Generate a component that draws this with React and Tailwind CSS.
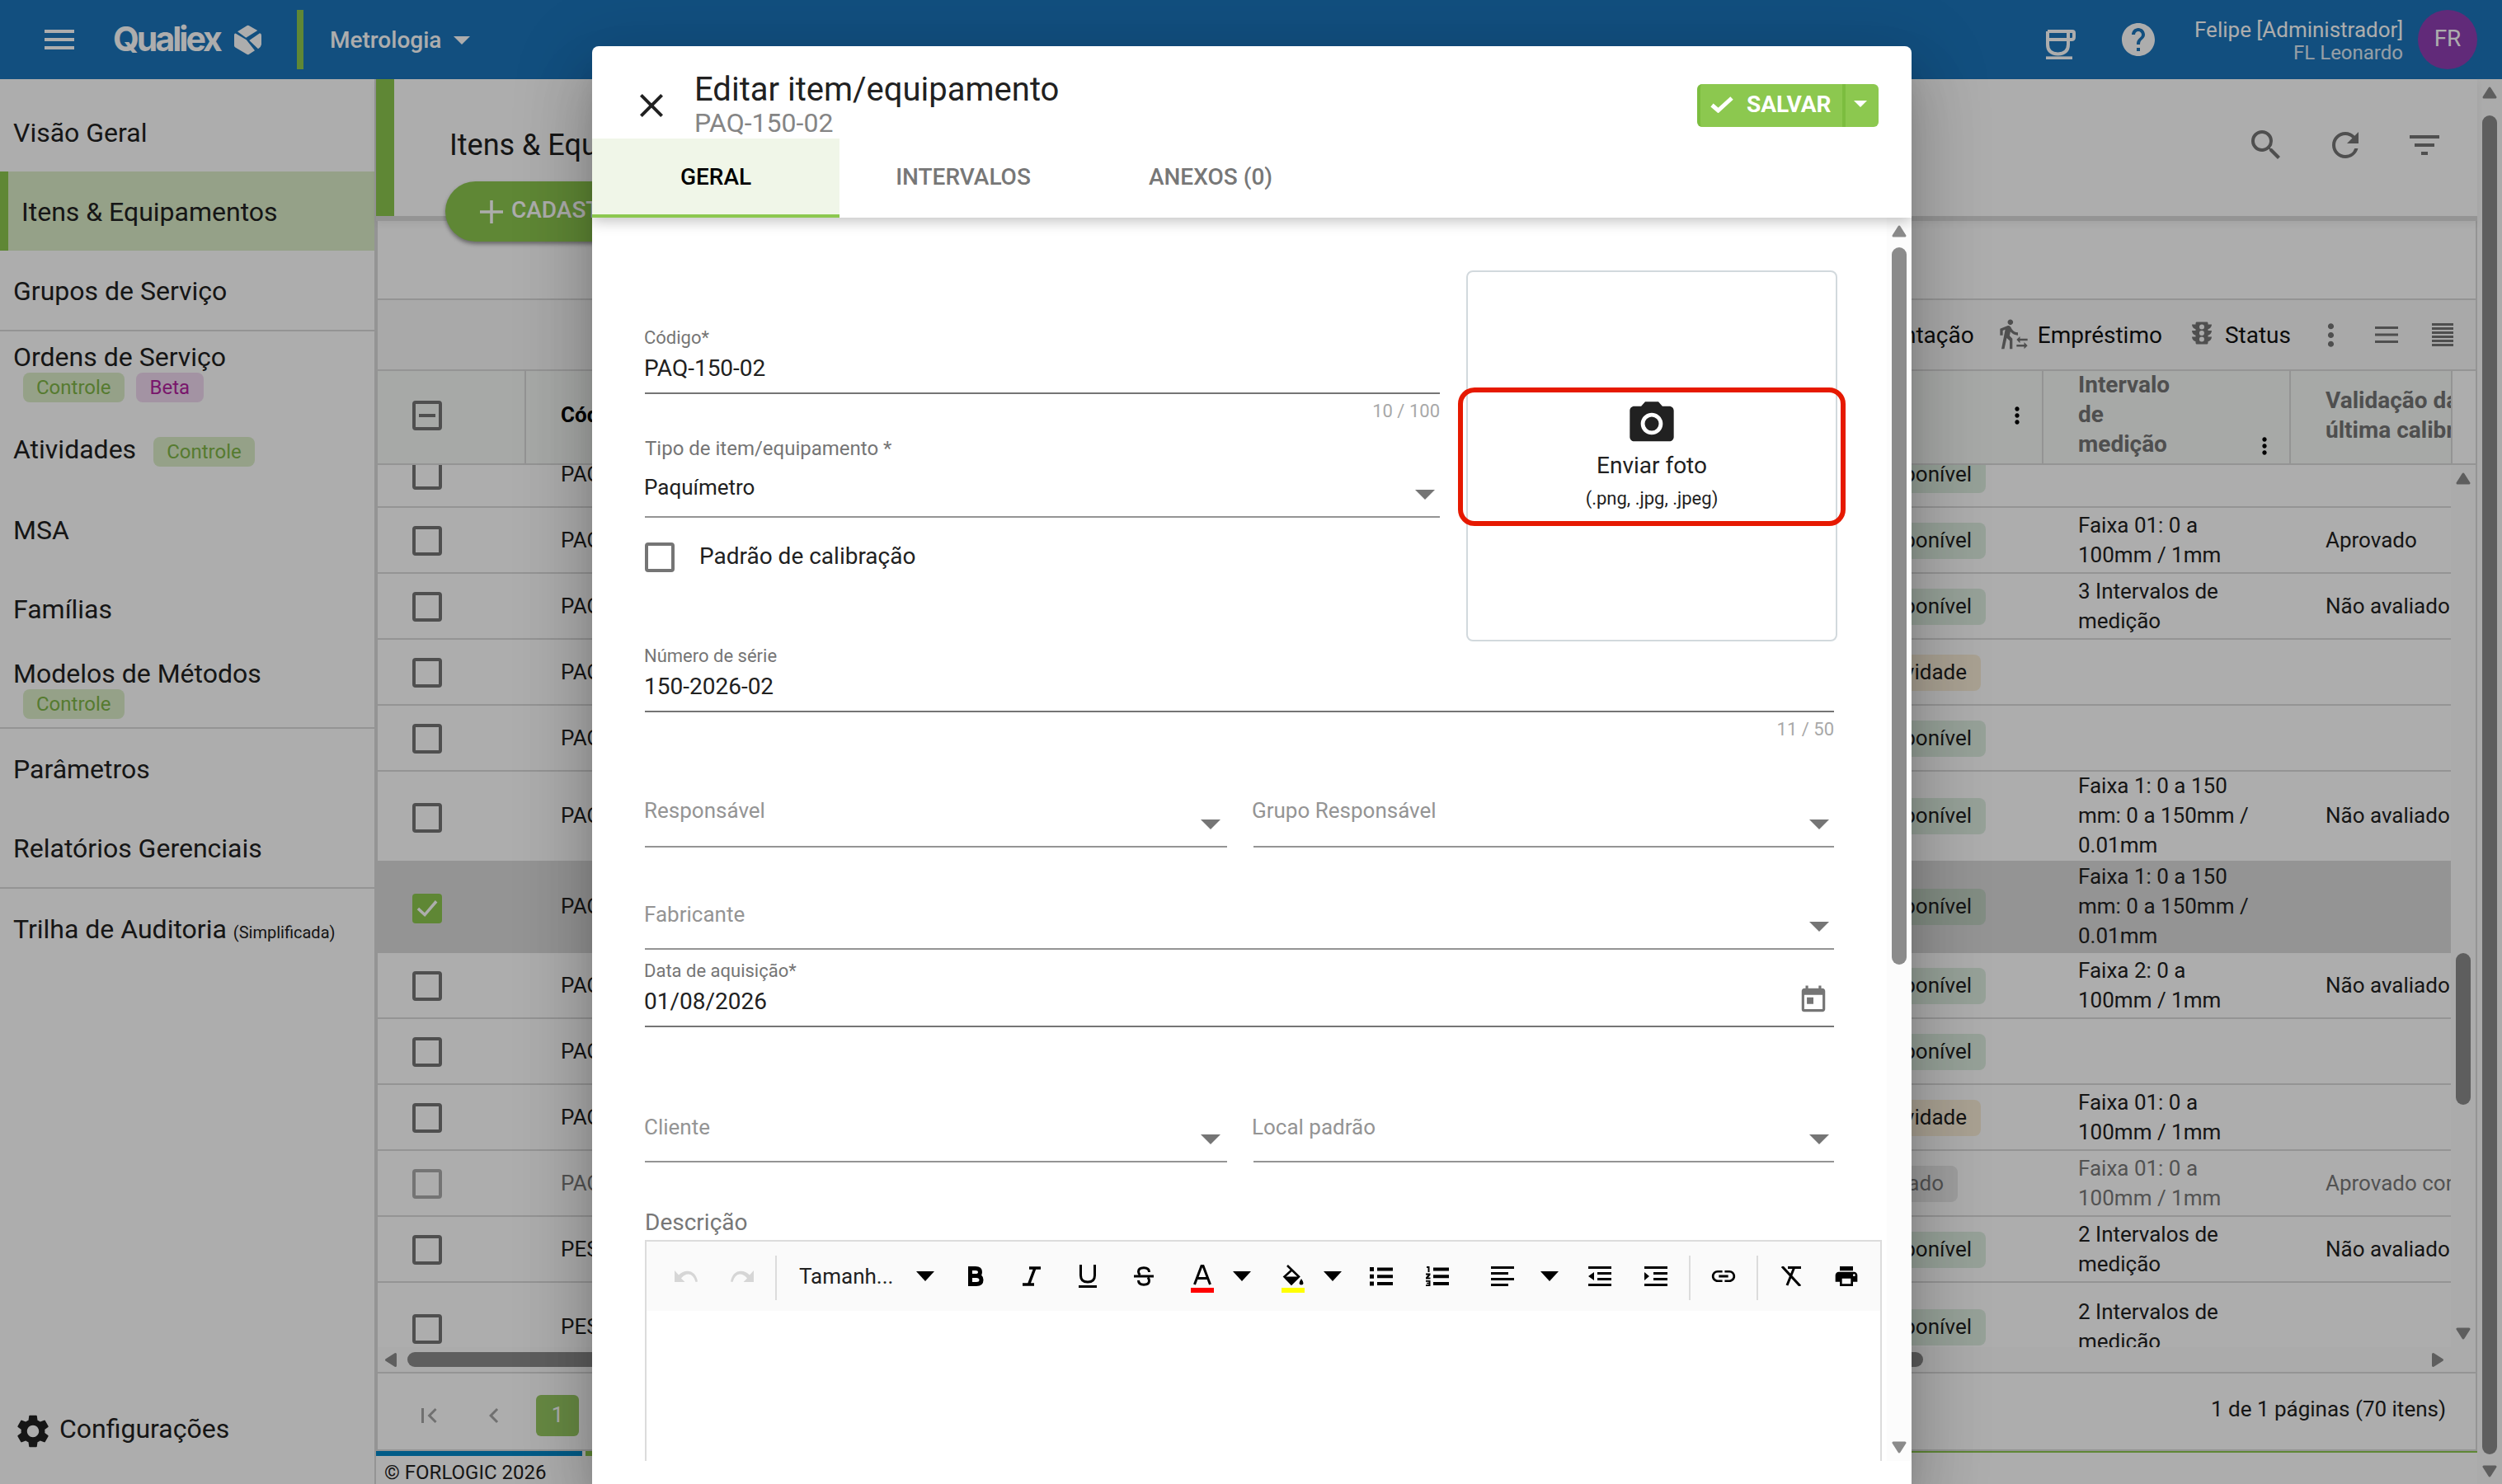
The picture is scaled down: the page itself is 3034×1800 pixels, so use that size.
import React from 'react';
import {
  MdMenu, MdHelp, MdSearch, MdRefresh, MdFilterList, MdSettings, MdClose, MdPhotoCamera, MdToday,
  MdTransferWithinAStation, MdTraffic, MdMoreVert, MdPrint, MdLink, MdFirstPage, MdChevronLeft,
} from 'react-icons/md';

const menu = [
  { nome: 'Visão Geral' },
  { nome: 'Itens & Equipamentos', ativo: true },
  { nome: 'Grupos de Serviço', linha: true },
  { nome: 'Ordens de Serviço', abaixo: ['Controle', 'Beta'] },
  { nome: 'Atividades', lado: true },
  { nome: 'MSA' },
  { nome: 'Famílias' },
  { nome: 'Modelos de Métodos', abaixo: ['Controle'], linha: true },
  { nome: 'Parâmetros' },
  { nome: 'Relatórios Gerenciais', linha: true },
  { nome: 'Trilha de Auditoria', nota: '(Simplificada)' },
];

const linhas = [
  { cod: 'PAQ', status: 'disp', faixa: [], val: '' },
  { cod: 'PAQ', status: 'disp', faixa: ['Faixa 01: 0 a', '100mm / 1mm'], val: 'Aprovado' },
  { cod: 'PAQ', status: 'disp', faixa: ['3 Intervalos de', 'medição'], val: 'Não avaliado' },
  { cod: 'PAQ', status: 'ativ', faixa: [], val: '' },
  { cod: 'PAQ', status: 'disp', faixa: [], val: '' },
  { cod: 'PAQ', status: 'disp', faixa: ['Faixa 1: 0 a 150', 'mm: 0 a 150mm /', '0.01mm'], val: 'Não avaliado', alta: true },
  { cod: 'PAQ', status: 'disp', faixa: ['Faixa 1: 0 a 150', 'mm: 0 a 150mm /', '0.01mm'], val: '', alta: true, marcado: true },
  { cod: 'PAQ', status: 'disp', faixa: ['Faixa 2: 0 a', '100mm / 1mm'], val: 'Não avaliado' },
  { cod: 'PAQ', status: 'disp', faixa: [], val: '' },
  { cod: 'PAQ', status: 'ativ', faixa: ['Faixa 01: 0 a', '100mm / 1mm'], val: '' },
  { cod: 'PAQ', status: 'inat', faixa: ['Faixa 01: 0 a', '100mm / 1mm'], val: 'Aprovado com', apagado: true },
  { cod: 'PES', status: 'disp', faixa: ['2 Intervalos de', 'medição'], val: 'Não avaliado' },
  { cod: 'PES', status: 'disp', faixa: ['2 Intervalos de', 'medição'], val: '', alta: true },
];

const tags = {
  disp: { texto: 'Disponível', cor: 'bg-[#51a55c]/19 mr-[68px]' },
  ativ: { texto: 'Em atividade', cor: 'bg-[#faeed7] mr-[74px]' },
  inat: { texto: 'Inativado', cor: 'bg-[#dcdcdc] mr-[102px]' },
};

const Seta = ({ className = 'w-6 h-3' }) => (
  <svg viewBox="0 0 24 12" preserveAspectRatio="none" className={className} fill="currentColor">
    <path d="M0 0h24L12 12z" />
  </svg>
);

const SetaRolagem = ({ className = '' }) => (
  <svg viewBox="0 0 18 15" className={`w-[18px] h-[15px] shrink-0 ${className}`} fill="currentColor" stroke="currentColor" strokeWidth="3" strokeLinejoin="round">
    <path d="M9 2L16 13H2z" />
  </svg>
);

const Caixa = ({ marcado, parcial }) => (
  <span
    className={`w-9 h-9 shrink-0 rounded-[4px] flex items-center justify-center ${
      marcado ? 'bg-[#8cc84f] text-white' : 'border-4 border-[#757575] text-[#757575]'
    }`}
  >
    {marcado && (
      <svg viewBox="0 0 24 24" className="w-7 h-7" fill="none" stroke="currentColor" strokeWidth="3">
        <path d="M2.500 12L9.500 18.500 21.500 4.500" />
      </svg>
    )}
    {parcial && <span className="w-5 h-1 bg-[#757575]" />}
  </span>
);

const Selo = ({ children }) => (
  <span
    className={`h-9 rounded-lg text-[24px] leading-9 ${
      children === 'Beta' ? 'px-[17px] bg-[#f0d9f0] text-[#b3239f]' : 'px-4 bg-[#dceec9] text-[#7fb547]'
    }`}
  >
    {children}
  </span>
);

const Cabecalho = () => (
  <header className="h-24 shrink-0 bg-[#1b75bb] text-white flex items-center">
    <MdMenu className="w-12 h-12 ml-12" />
    <div className="ml-[41px] flex items-center w-[183px]">
      <span className="font-[Inter] font-bold text-[41px] leading-[46px] tracking-[-3px] w-[147px] mb-[2px]">Qualiex</span>
      <svg viewBox="0 0 33 37" className="w-[33px] h-[37px] shrink-0" fill="currentColor">
        <path d="M15.700 1q1-.6 2 0L28.300 7 14.300 15.800 4 8.300z" />
        <path d="M0 12.500Q.2 10 2 10.800L14.700 18.300 25 31.300 17.700 36q-1 .6-2 0L1.300 27.500Q0 26.700 0 25.300z" />
        <path d="M18.300 19L31 10.300Q33 10.500 33 13v11Q32.500 27 29 29.300z" />
      </svg>
    </div>
    <div className="w-2 h-[72px] bg-[#8cc84f] ml-[40px]" />
    <span className="ml-[32px] mt-[2px] text-[28px] font-medium">Metrologia</span>
    <Seta className="w-5 h-[10px] ml-[15px] mt-[2px]" />
    <div className="ml-auto flex items-center">
      <svg viewBox="0 0 36 36" className="w-9 h-9 mt-3" fill="none" stroke="currentColor" strokeWidth="4">
        <path d="M2 2h30q2 0 2 2v5q0 3-3 3h-4M2 2v16q0 11 12.500 11.500Q27 29 27 18V2M2 12h25" />
        <path d="M0 34.200h32" strokeWidth="3.600" />
      </svg>
      <MdHelp className="w-12 h-12 ml-[52px]" />
      <div className="ml-[44px] w-[253px] text-right">
        <div className="text-[26px] leading-[36px] whitespace-nowrap">Felipe [Administrador]</div>
        <div className="text-[24px] leading-7 text-white/85 -mt-[4px]">FL Leonardo</div>
      </div>
      <div className="w-[72px] h-[72px] rounded-full bg-[#903eb3] ml-[18px] mr-[30px] flex items-center justify-center text-[28px] leading-[68px] pb-[3px]">FR</div>
    </div>
  </header>
);

const Lateral = () => (
  <aside className="w-[456px] shrink-0 border-r-2 border-[#dadada] pt-4 flex flex-col text-[32px]">
    {menu.map((m) => (
      <div
        key={m.nome}
        className={`shrink-0 flex flex-col justify-center whitespace-nowrap pl-4 ${m.linha ? 'h-[98px] border-b-2 border-[#dadada]' : 'h-24'} ${
          m.ativo ? 'bg-[#dceec9] border-l-[10px] border-[#8cc84f]' : ''
        }`}
      >
        <div className={`flex items-center ${m.abaixo ? 'leading-[36px] mt-px' : 'leading-10'} ${m.lado ? '-mt-[2px]' : 'pt-px'}`}>
          {m.nome}
          {m.nota && <span className="text-[20px] ml-2 mt-2">{m.nota}</span>}
          {m.lado && <div className="ml-[21px] mt-[6px] flex"><Selo>Controle</Selo></div>}
        </div>
        {m.abaixo && (
          <div className="flex gap-[14px] ml-3 mt-px -mb-px leading-9">
            {m.abaixo.map((s) => <Selo key={s}>{s}</Selo>)}
          </div>
        )}
      </div>
    ))}
    <div className="mt-auto mb-[40px] ml-4 flex items-center">
      <MdSettings className="w-12 h-12" />
      <span className="ml-2 mt-[-7px] leading-10">Configurações</span>
    </div>
  </aside>
);

const Linha = ({ linha }) => {
  const tag = tags[linha.status];
  return (
    <div className={`shrink-0 border-b-2 border-[#dadada] ${linha.alta ? 'h-[110px]' : 'h-20'} ${linha.marcado ? 'bg-[#dadada]' : ''}`}>
      <div className={`h-full flex items-center text-[26px] leading-9 whitespace-nowrap ${linha.apagado ? 'opacity-60' : ''} ${linha.alta ? 'pb-[2px]' : ''}`}>
        <div className={`w-[180px] pl-[42px] ${linha.alta ? 'pt-[5px]' : 'pt-[2px]'}`}><Caixa marcado={linha.marcado} /></div>
        <div className="pl-[42px]">{linha.cod}</div>
        <div className={`ml-auto h-11 mt-[2px] px-[17px] rounded-lg leading-[42px] ${tag.cor}`}>{tag.texto}</div>
        <div className="w-[300px] pl-[44px]">
          {linha.faixa.map((f) => <div key={f}>{f}</div>)}
        </div>
        <div className="w-[196px] pl-[44px] overflow-hidden">{linha.val}</div>
      </div>
    </div>
  );
};

const Tabela = () => (
  <>
    <div className="h-[114px] shrink-0 flex border-b-2 border-[#dadada] text-[28px] leading-9 font-bold">
      <div className="w-[2516px] flex bg-[#f6faf7] overflow-hidden border-r-2 border-[#dadada]">
        <div className="w-[180px] shrink-0 border-r-2 border-[#dadada] pl-[42px] pb-1 flex items-center"><Caixa parcial /></div>
        <div className="flex-1 pl-[42px] flex items-center text-black text-[26px] pb-[6px]">Cód</div>
        <div className="w-[300px] shrink-0 border-r-2 border-[#dadada] flex items-center justify-end pb-1">
          <MdMoreVert className="w-[32px] h-[32px] text-black mr-[14px]" />
        </div>
        <div className="w-[300px] shrink-0 border-r-2 border-[#dadada] pl-[42px] pb-[5px] flex justify-between items-end text-[#757575]">
          <div>Intervalo<br />de<br />medição</div>
          <MdMoreVert className="w-[32px] h-[32px] text-black mr-[14px]" />
        </div>
        <div className="w-[194px] shrink-0 pl-[42px] pb-[5px] flex items-center whitespace-nowrap text-[#757575]">
          <div>Validação da<br />última calibração</div>
        </div>
      </div>
    </div>
    <div className="h-[1070px] shrink-0 flex overflow-hidden">
      <div className="w-[2514px] h-full overflow-hidden">
        <div className="-mt-[28px] flex flex-col">
          {linhas.map((l, i) => <Linha key={i} linha={l} />)}
        </div>
      </div>
      <div className="w-[30px] flex flex-col items-center text-[#8b8b8b] bg-[#fcfcfc]">
        <SetaRolagem className="mt-[9px]" />
        <div className="w-[18px] h-[184px] rounded-full bg-[#8b8b8b] mt-[568px]" />
        <SetaRolagem className="rotate-180 mt-[270px]" />
      </div>
    </div>
    <div className="h-8 shrink-0 border-b-2 border-[#dadada] flex items-center text-[#8b8b8b] bg-[#fcfcfc]">
      <SetaRolagem className="-rotate-90 ml-[7px]" />
      <div className="w-[1838px] h-[18px] rounded-full bg-[#8b8b8b] ml-[11px]" />
      <SetaRolagem className="rotate-90 ml-auto mr-[37px]" />
    </div>
  </>
);

const Pagina = () => (
  <main className="w-[2548px] shrink-0 flex flex-col">
    <div className="relative z-10 h-[172px] shrink-0 border-b-[6px] border-[#dadada] flex shadow-[0_4px_8px_rgba(0,0,0,0.06)]">
      <div className="w-[22px] bg-[#8cc84f]" />
      <div className="ml-[67px] mt-[58px] text-[36px] leading-[44px]">Itens & Equ</div>
      <div className="ml-auto mt-14 mr-10 flex gap-12 text-[#757575]">
        <MdSearch className="w-12 h-12" />
        <MdRefresh className="w-12 h-12" />
        <MdFilterList className="w-12 h-12" />
      </div>
      <div className="absolute left-[84px] top-[124px] h-[73px] w-[280px] rounded-full bg-[#8cc84f] text-white flex items-center shadow-[0_3px_5px_rgba(0,0,0,0.4)]">
        <svg viewBox="0 0 28 28" className="w-7 h-7 ml-[42px]" stroke="currentColor" strokeWidth="3.500"><path d="M14 0v28M0 14h28" /></svg>
        <span className="ml-[10px] mb-[3px] text-[28px] font-medium">CADAST</span>
      </div>
    </div>
    <div className="h-[1492px] shrink-0 border-x-2 border-b-2 border-[#dadada] flex flex-col">
      <div className="h-24 shrink-0 border-b-2 border-[#dadada]" />
      <div className="h-[86px] shrink-0 border-b-2 border-[#dadada] bg-[#fafafa] flex items-center justify-end text-[28px] text-[#757575]">
        <span className="text-[#111] mt-px">ntação</span>
        <MdTransferWithinAStation className="w-[40px] h-[40px] ml-[28px] mt-[-2px]" />
        <span className="text-[#111] ml-[9px] mt-px">Empréstimo</span>
        <MdTraffic className="w-[36px] h-[38px] ml-[30px] mt-[-4px]" />
        <span className="text-[#111] ml-[10px] mt-px">Status</span>
        <MdMoreVert className="w-[43px] h-[43px] ml-[27px]" />
        <svg viewBox="0 0 28 20" className="w-7 h-5 ml-[32px]" fill="currentColor"><path d="M0 0h28v3H0zM0 8.500h28v3H0zM0 17h28v3H0z" /></svg>
        <svg viewBox="0 0 26 28" className="w-[26px] h-7 ml-[41px] mr-[27px]" fill="currentColor">
          <path d="M0 0h26v3H0zM0 5h26v3H0zM0 10h26v3H0zM0 15h26v3H0zM0 20h26v3H0zM0 25h26v3H0z" />
        </svg>
      </div>
      <Tabela />
      <div className="flex-1 flex items-center text-[26px]">
        <MdFirstPage className="w-9 h-9 ml-[44px] mt-[9px] text-black/35" />
        <MdChevronLeft className="w-9 h-9 ml-[43px] mt-[9px] text-black/35" />
        <span className="w-[52px] h-[50px] ml-[33px] mt-[9px] rounded-md bg-[#98cb64] text-white flex items-center justify-center">1</span>
        <span className="ml-auto mr-[36px] mb-[6px]">1 de 1 páginas (70 itens)</span>
      </div>
    </div>
    <div className="flex h-[6px] shrink-0">
      <div className="w-[250px] bg-[#0087c8]" />
      <div className="w-[250px] ml-1 bg-[#8cc84f]" />
      <div className="flex-1 h-[2px] bg-[#8cc84f]" />
    </div>
    <div className="pl-[10px] pt-[6px] text-[24px] leading-7">© FORLOGIC 2026</div>
  </main>
);

const Campo = ({ label, valor, contador, icone }) => (
  <div>
    <div className="relative border-b-2 border-[#757575] pb-[11px]">
      <div className="text-[22px] leading-7 text-[#757575] pt-px -ml-px">{label}</div>
      <div className="mt-[5px] text-[28px] leading-9 -ml-px">{valor}</div>
      {icone && <MdToday className="absolute right-[6px] bottom-[12px] w-[38px] h-[38px] text-[#757575]" />}
    </div>
    {contador && <div className="mt-[7px] -mb-px text-right text-[22px] leading-7 text-[#a8a8a8]">{contador}</div>}
  </div>
);

const Selecao = ({ label, className = '', recuo = '' }) => (
  <div className={`h-[63px] border-b-2 border-[#949494] flex justify-between text-[26px] leading-9 text-[#949494] ${className}`}>
    <span className={`-ml-px ${recuo}`}>{label}</span>
    <Seta className="w-6 h-3 mt-[29px] mr-[6px] text-[#757575]" />
  </div>
);

const IconeLinhas = ({ d, className = '' }) => (
  <svg viewBox="0 0 28 24" className={`w-7 h-6 shrink-0 ${className}`} fill="currentColor"><path d={d} /></svg>
);

const Desfazer = ({ className = '' }) => (
  <svg viewBox="0 0 28 14" className={`w-7 h-[14px] text-[#d6d6d6] ${className}`} fill="currentColor">
    <path d="M0 0v14h12.500L8 9.500Q12 4.500 17 4.500 23 5 25.500 14L28 13.500Q25.500 1 15.500.8 9.500 1 5 5.500z" />
  </svg>
);

const Editor = () => (
  <div className="w-[1500px] h-[268px] border-2 border-b-0 border-[#dcdcdc]">
    <div className="h-[84px] bg-[#fafafa] flex items-center text-black">
      <Desfazer className="ml-[34px]" />
      <Desfazer className="ml-[40px] -scale-x-100" />
      <div className="w-[2px] h-[54px] ml-[26px] mt-1 bg-[#dcdcdc]" />
      <span className="ml-[27px] w-[142px] text-[26px] text-[#212121]">Tamanh...</span>
      <Seta className="w-[22px] h-3 shrink-0" />
      <svg viewBox="0 0 20 24" className="w-5 h-6 ml-[40px]" fill="none" stroke="currentColor" strokeWidth="5">
        <path d="M3.500 2.500H10q5.500 0 5.500 4.500T10 11.500H3.500zM3.500 11.500H11q6 0 6 5t-6 5H3.500z" />
      </svg>
      <svg viewBox="0 0 22 24" className="w-[22px] h-6 ml-[47px]" fill="none" stroke="currentColor" strokeWidth="3.500">
        <path d="M8 2h14M0 22h14M15 2L7.500 22" />
      </svg>
      <svg viewBox="0 0 22 28" className="w-[22px] h-7 ml-[46px]" fill="none" stroke="currentColor" strokeWidth="3">
        <path d="M2.500 0v13q0 8 8.500 8t8.500-8V0M0 26.500h22" />
      </svg>
      <svg viewBox="0 0 24 24" className="w-6 h-6 ml-[45px]" fill="none" stroke="currentColor" strokeWidth="3">
        <path d="M0 12h24M18.500 7Q18.500 1.800 12 1.800T5.500 6.500Q5.500 9 7.500 10.500M5.500 17q0 5.200 6.500 5.200t6.500-4.700q0-2.200-1.500-4" />
      </svg>
      <svg viewBox="0 0 28 34" className="w-7 h-[34px] ml-[45px] mt-[6px]" fill="none">
        <path d="M4.500 24L13 1.500h2L23.500 24M7.500 16.500h13" stroke="currentColor" strokeWidth="3" />
        <path d="M0 28h28v6H0z" fill="#f00" />
      </svg>
      <Seta className="w-[22px] h-3 ml-[23px] shrink-0" />
      <svg viewBox="0 0 28 34" className="w-7 h-[34px] ml-[37px] mt-[6px]">
        <path d="M7 1L21 14.500 12 23.500 3.500 14.500 13 6" fill="none" stroke="currentColor" strokeWidth="2.600" />
        <path d="M3 14.500h18.500L12 24.500zM24 17q5 7 0 7.500-5-.5 0-7.500z" fill="currentColor" />
        <path d="M0 28h28v6H0z" fill="#ff0" />
      </svg>
      <Seta className="w-[22px] h-3 ml-[23px] shrink-0" />
      <IconeLinhas className="ml-[34px]" d="M9 1.500h19v4H9zM9 10.200h19v4H9zM9 19h19v4H9zM0 1h5v5H0zM0 9.700h5v5H0zM0 18.500h5v5H0z" />
      <IconeLinhas className="ml-[40px]" d="M9 1.500h19v4H9zM9 10.200h19v4H9zM9 19h19v4H9zM1 0h3.500v7H2.500V2H1zM0 8.500h5.500v2L3 13.500h2.500v2H0v-2l2.500-3H0zM0 17h5.500v7H0v-1.800h3.500v-1H1v-1.500h2.500v-1H0z" />
      <IconeLinhas className="ml-[51px]" d="M0 0h28v3H0zM0 7h21v3H0zM0 14h28v3H0zM0 21h21v3H0z" />
      <Seta className="w-[22px] h-3 ml-[32px] shrink-0" />
      <IconeLinhas className="ml-[36px]" d="M0 0h28v3H0zM11 7h17v3H11zM11 14h17v3H11zM0 21h28v3H0zM7 7v10L0 12z" />
      <IconeLinhas className="ml-[40px]" d="M0 0h28v3H0zM11 7h17v3H11zM11 14h17v3H11zM0 21h28v3H0zM0 7v10l6-5z" />
      <div className="w-[2px] h-[54px] ml-[26px] mt-1 bg-[#dcdcdc]" />
      <MdLink className="w-[38px] h-[34px] ml-[21px] shrink-0" />
      <div className="w-[2px] h-[54px] ml-[21px] mt-1 bg-[#dcdcdc]" />
      <svg viewBox="0 0 24 24" className="w-6 h-6 ml-[28px]" fill="none" stroke="currentColor" strokeWidth="3">
        <path d="M1 0l22 24M8 1.500h16M15.500 2L7 23" />
      </svg>
      <MdPrint className="w-[34px] h-[32px] ml-[38px] shrink-0" />
    </div>
  </div>
);

const Modal = () => (
  <div className="absolute z-30 left-[718px] top-14 w-[1600px] h-[1744px] bg-white rounded-t-lg flex flex-col shadow-[0_22px_30px_-14px_rgba(0,0,0,0.2),0_48px_76px_6px_rgba(0,0,0,0.14),0_18px_92px_16px_rgba(0,0,0,0.12)]">
    <div className="relative z-10 shrink-0 shadow-[0_4px_16px_rgba(0,0,0,0.25)] [clip-path:inset(0_0_-40px_0)]">
      <div className="h-28 flex">
        <MdClose className="w-12 h-12 ml-12 mt-12" />
        <div className="ml-[28px] mt-[31px]">
          <div className="text-[40px] leading-[44px]">Editar item/equipamento</div>
          <div className="text-[32px] leading-9 text-[#858585]">PAQ-150-02</div>
        </div>
        <div className="ml-auto mr-10 mt-[46px] h-[52px] w-[220px] rounded-md bg-[#8cc84f] overflow-hidden border-l-4 border-[#7cbd3f] text-white flex items-center">
          <svg viewBox="0 0 28 20" className="w-7 h-5 ml-3 mb-[2px]" fill="none" stroke="currentColor" strokeWidth="5">
            <path d="M2 10.500l7.500 6.500L26 2" />
          </svg>
          <span className="ml-[16px] mb-[2px] text-[28px] font-bold w-[100px]">SALVAR</span>
          <span className="w-1 h-full bg-[#7cbd3f] ml-4" />
          <Seta className="w-4 h-2 ml-[10px] mb-1" />
        </div>
      </div>
      <div className="h-24 flex text-[28px] font-medium text-center leading-[94px] text-[#777]">
        <div className="w-[300px] bg-[#f0f6e8] border-b-4 border-[#8cc84f] text-black">GERAL</div>
        <div className="w-[300px]">INTERVALOS</div>
        <div className="w-[300px]">ANEXOS (0)</div>
      </div>
    </div>
    <div className="h-[1508px] shrink-0 flex overflow-hidden">
      <div className="w-[1570px] pl-16 pt-16">
        <div className="flex w-[1446px]">
          <div className="w-[964px] pt-[67px]">
            <Campo label="Código*" valor="PAQ-150-02" contador="10 / 100" />
            <div className="mt-[18px] border-b-2 border-[#949494] pb-[17px]">
              <div className="text-[24px] leading-7 text-[#757575]">Tipo de item/equipamento *</div>
              <div className="mt-[15px] -ml-px text-[26px] leading-9 flex justify-between">
                Paquímetro
                <Seta className="w-6 h-3 mt-[21px] mr-[6px] text-[#757575]" />
              </div>
            </div>
            <div className="mt-[30px] flex items-center text-[28px]">
              <Caixa />
              <span className="ml-[30px] mt-[-2px] leading-8">Padrão de calibração</span>
            </div>
          </div>
          <div className="relative ml-8 w-[450px] h-[450px] border-2 border-[#d2d9dd] rounded-lg flex flex-col items-center pt-[152px]">
            <MdPhotoCamera className="w-16 h-16" />
            <div className="text-[28px] leading-9 mt-px">Enviar foto</div>
            <div className="text-[22px] leading-7 mt-2">(.png, .jpg, .jpeg)</div>
            <div className="absolute left-[-12px] top-[140px] w-[470px] h-[168px] border-[6px] border-[#e61900] rounded-[20px]" />
          </div>
        </div>
        <div className="w-[1442px]">
          <div className="mt-[3px]"><Campo label="Número de série" valor="150-2026-02" contador="11 / 50" /></div>
          <div className="mt-[67px] flex gap-8">
            <Selecao label="Responsável" className="w-[706px] pr-[2px]" />
            <Selecao label="Grupo Responsável" className="w-[704px]" recuo="-translate-x-px" />
          </div>
          <Selecao label="Fabricante" className="mt-[61px]" recuo="pt-[2px]" />
          <div className="mt-[11px]"><Campo label="Data de aquisição*" valor="01/08/2026" icone /></div>
          <div className="mt-[101px] flex gap-8">
            <Selecao label="Cliente" className="w-[706px] pr-[2px]" recuo="pt-[2px]" />
            <Selecao label="Local padrão" className="w-[704px]" recuo="pt-[2px] -translate-x-px" />
          </div>
        </div>
        <div className="mt-[55px] mb-[3px] text-[28px] leading-9 text-[#777]">Descrição</div>
        <Editor />
      </div>
      <div className="w-[30px] bg-[#fcfcfc] flex flex-col items-center text-[#8b8b8b]">
        <SetaRolagem className="mt-[9px]" />
        <div className="w-[18px] h-[870px] shrink-0 rounded-full bg-[#8b8b8b] mt-3" />
        <SetaRolagem className="rotate-180 mt-auto mb-[9px]" />
      </div>
    </div>
  </div>
);

const App = () => (
  <div className="relative w-[3034px] h-[1800px] overflow-hidden bg-white text-[#212121] font-[Roboto,sans-serif] flex flex-col">
    <Cabecalho />
    <div className="flex flex-1 min-h-0">
      <Lateral />
      <Pagina />
      <div className="w-[30px] bg-[#fcfcfc] flex flex-col items-center text-[#8b8b8b]">
        <SetaRolagem className="mt-[9px]" />
        <div className="w-[18px] h-[1624px] rounded-full bg-[#8b8b8b] mt-[20px]" />
        <SetaRolagem className="rotate-180 mt-[13px]" />
      </div>
    </div>
    <div className="absolute z-20 inset-0 bg-black/32" />
    <Modal />
  </div>
);

export default App;
